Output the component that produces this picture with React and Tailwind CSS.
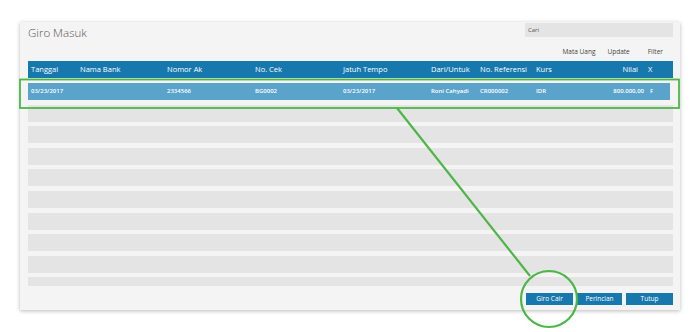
import React from "react";

const columns = [
  { label: "Tanggal", width: "w-[49px]" },
  { label: "Nama Bank", width: "w-[87px]" },
  { label: "Nomor Ak", width: "w-[88px]" },
  { label: "No. Cek", width: "w-[88px]" },
  { label: "Jatuh Tempo", width: "w-[88px]" },
  { label: "Dari/Untuk", width: "w-[49px]" },
  { label: "No. Referensi", width: "w-[56px]" },
  { label: "Kurs", width: "w-[40px]" },
];

const selected = ["03/23/2017", "", "2334566", "BG0002", "03/23/2017", "Roni Cahyadi", "CR000002", "IDR"];

const GiroMasuk = () => {
  const emptyRows = Array.from({ length: 9 });

  return (
    <div
      className="relative w-[700px] h-[332px] bg-white overflow-hidden"
      style={{ fontFamily: '"Open Sans", "Noto Sans", sans-serif' }}
    >
      {/* Window */}
      <div className="ml-[20px] mt-[22px] w-[660px] h-[288px] bg-[#f4f4f4] shadow-[0_1px_4px_rgba(0,0,0,0.28)] pl-[8px] pr-[7px] flex flex-col">
        {/* Title + search */}
        <div className="flex justify-between items-start pt-[1px]">
          <h1 className="text-[11.5px] font-light text-[#555] leading-none mt-[4px]">Giro Masuk</h1>
          <div className="w-[148px] h-[14px] bg-[#e4e4e4] text-[6px] text-[#555] pl-[3px] flex items-center">Cari</div>
        </div>

        {/* Toolbar */}
        <div className="flex justify-end gap-[12px] pr-[10px] mt-[10px] text-[6.5px] text-[#444] leading-none">
          <span>Mata Uang</span>
          <span>Update</span>
          <span className="ml-[6px]">Filter</span>
        </div>

        {/* Header */}
        <div className="mt-[6px] h-[17px] bg-[#1678ad] flex items-center pl-[3px] text-white text-[7.5px]">
          {columns.map((c) => (
            <span key={c.label} className={`${c.width} shrink-0 whitespace-nowrap`}>
              {c.label}
            </span>
          ))}
          <span className="flex-1 text-right">Nilai</span>
          <span className="w-[10px] shrink-0" />
          <span className="w-[25px] shrink-0">X</span>
        </div>

        {/* Grid */}
        <div className="mt-[5px] h-[203px] overflow-hidden flex flex-col gap-[4.6px]">
          <div className="h-[17px] shrink-0 mr-[3px] bg-[#5aa3cb] flex items-center pl-[3px] text-white text-[6px] font-semibold">
            {columns.map((c, i) => (
              <span key={c.label} className={`${c.width} shrink-0 whitespace-nowrap`}>
                {selected[i]}
              </span>
            ))}
            <span className="flex-1 text-right">800.000,00</span>
            <span className="w-[6px] shrink-0" />
            <span className="w-[20px] shrink-0">F</span>
          </div>
          {emptyRows.map((_, i) => (
            <div key={i} className="h-[17px] shrink-0 bg-[#e4e4e4]" />
          ))}
        </div>

        {/* Buttons */}
        <div className="mt-[7px] flex justify-end gap-[4px] text-[6.5px] text-white">
          <button className="w-[47px] h-[12px] bg-[#1678ad] leading-none">Giro Cair</button>
          <button className="w-[45px] h-[12px] bg-[#1678ad] leading-none">Perincian</button>
          <button className="w-[47px] h-[12px] bg-[#1678ad] leading-none">Tutup</button>
        </div>
      </div>

      {/* Annotation overlay */}
      <svg className="absolute inset-0 pointer-events-none" width="700" height="332" viewBox="0 0 700 332">
        <rect x="20" y="79.5" width="659" height="28.5" fill="none" stroke="#4cb648" strokeWidth="1.8" />
        <line x1="397" y1="108" x2="530" y2="276" stroke="#4cb648" strokeWidth="2.2" />
        <circle cx="549" cy="299" r="28" fill="none" stroke="#4cb648" strokeWidth="2.2" />
      </svg>
    </div>
  );
};

export default GiroMasuk;
